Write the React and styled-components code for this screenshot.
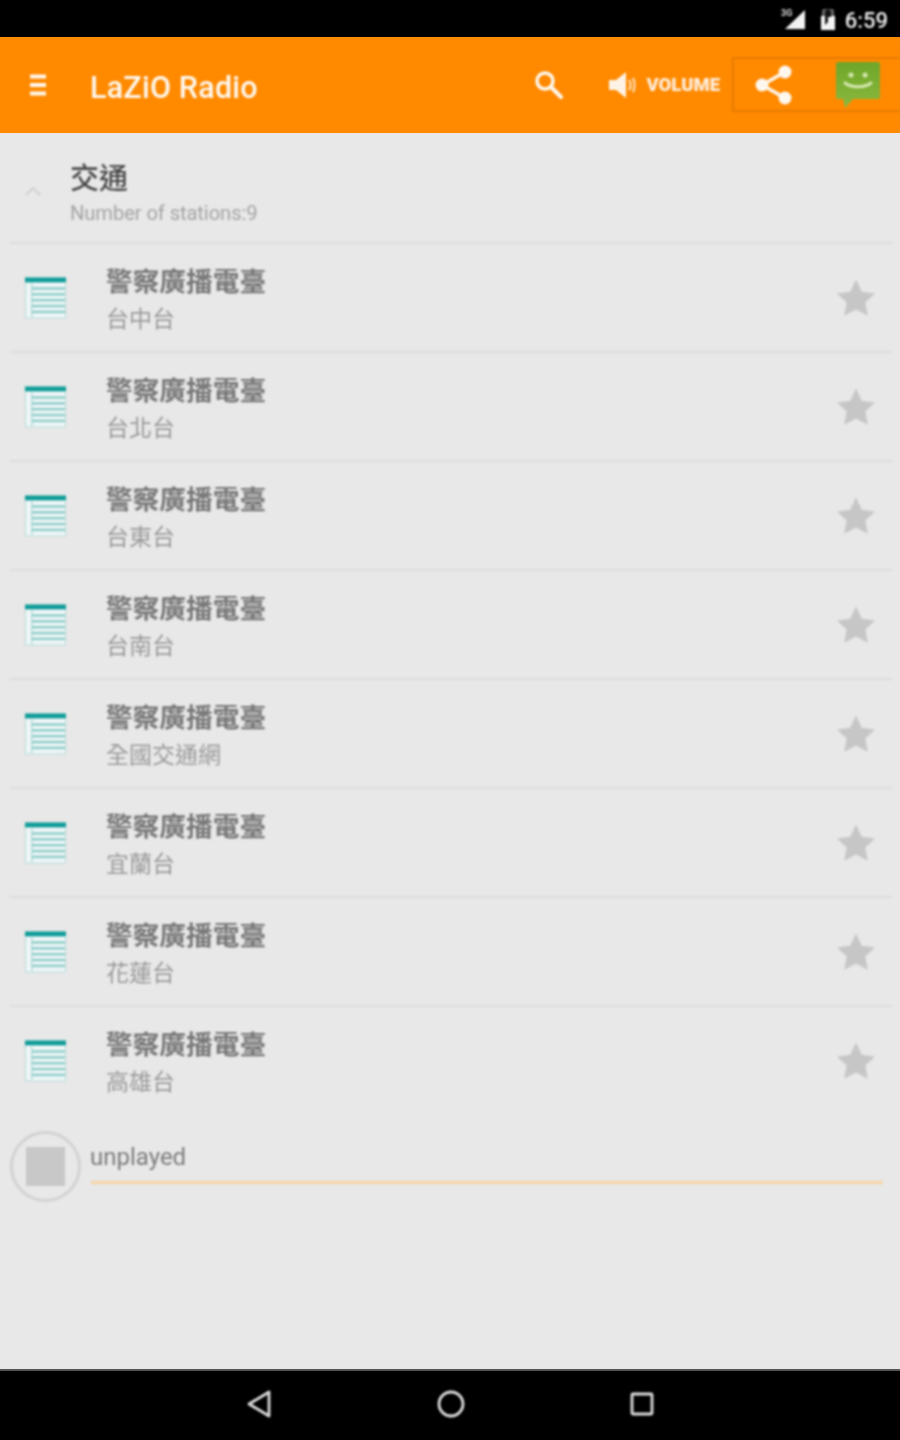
import React from 'react';
import styled, { createGlobalStyle, css } from 'styled-components';

const Global = createGlobalStyle`
  html, body { margin: 0; padding: 0; background: #e8e8e8; }
  * { box-sizing: border-box; }
`;

const soft = css`
  filter: blur(0.8px);
`;

const Page = styled.div`
  width: 900px;
  height: 1440px;
  display: flex;
  flex-direction: column;
  overflow: hidden;
  background: #e8e8e8;
  font-family: Roboto, "Noto Sans CJK TC", sans-serif;
`;

const StatusBar = styled.div`
  height: 37px;
  flex: none;
  background: #000;
`;

const StatusInner = styled.div`
  ${soft}
  height: 100%;
  display: flex;
  align-items: center;
  justify-content: flex-end;
  padding-right: 12px;
  gap: 8px;
`;

const Clock = styled.span`
  color: #ececec;
  font-size: 22px;
  font-weight: 500;
  line-height: 37px;
  padding-top: 3px;
`;

const Toolbar = styled.header`
  height: 96px;
  flex: none;
  background: #ff8a00;
`;

const ToolbarInner = styled.div`
  ${soft}
  height: 100%;
  display: flex;
  align-items: center;
  padding-left: 30px;
`;

const AppTitle = styled.h1`
  margin: 6px 0 0 44px;
  color: #fff8ef;
  font-size: 30.5px;
  font-weight: 500;
  letter-spacing: 0.2px;
  flex: 1;
  line-height: 1;
`;

const VolumeGroup = styled.div`
  display: flex;
  align-items: center;
  gap: 8px;
  margin-left: 44px;
  margin-right: 12px;
`;

const VolumeLabel = styled.span`
  color: #ffeedd;
  font-size: 18.5px;
  font-weight: 900;
  letter-spacing: 0;
`;

const ActionBox = styled.div`
  width: 168px;
  height: 55px;
  margin-top: -1px;
  border: 2px solid #e67c02;
  border-right: none;
  display: flex;
  align-items: center;
  padding-left: 21px;
  gap: 43px;
`;

const Content = styled.main`
  ${soft}
  flex: 1;
  display: flex;
  flex-direction: column;
`;

const Group = styled.div`
  height: 111px;
  margin: 0 8px 0 10px;
  border-bottom: 2px solid #dedede;
  display: flex;
  align-items: center;
  padding-left: 13px;
`;

const Chevron = styled.svg`
  width: 20px;
  height: 12px;
  flex: none;
  margin: 6px 27px 0 0;
`;

const GroupText = styled.div`
  display: flex;
  flex-direction: column;
  padding-top: 10px;
`;

const GroupTitle = styled.div`
  font-size: 29px;
  font-weight: 500;
  line-height: 38px;
  color: #4a4a4a;
`;

const GroupSub = styled.div`
  font-size: 20.2px;
  line-height: 26px;
  margin-top: 2px;
  color: #a4a4a4;
  letter-spacing: -0.1px;
`;

const Row = styled.div`
  height: 109px;
  margin: 0 8px 0 10px;
  border-bottom: 2px solid ${p => (p.$last ? 'transparent' : '#dedede')};
  display: flex;
  align-items: center;
  padding: 0 16px 0 15px;
`;

const RowIcon = styled.svg`
  width: 41px;
  height: 42px;
  flex: none;
`;

const RowText = styled.div`
  flex: 1;
  margin-left: 40px;
  padding-top: 5px;
  display: flex;
  flex-direction: column;
`;

const RowTitle = styled.div`
  font-size: 26.7px;
  font-weight: 700;
  line-height: 34px;
  color: #777777;
`;

const RowSub = styled.div`
  font-size: 23px;
  line-height: 30px;
  margin-top: 6px;
  color: #9a9a9a;
`;

const Star = styled.svg`
  width: 40px;
  height: 40px;
  flex: none;
`;

const Player = styled.div`
  display: flex;
  align-items: flex-start;
  padding: 15px 17px 0 10px;
`;

const StopButton = styled.div`
  width: 71px;
  height: 71px;
  border-radius: 50%;
  border: 3px solid #d2d2d2;
  display: flex;
  align-items: center;
  justify-content: center;
  flex: none;
`;

const StopSquare = styled.div`
  width: 39px;
  height: 39px;
  background: #c8c8c8;
`;

const Track = styled.div`
  flex: 1;
  margin-left: 10px;
  height: 53px;
  border-bottom: 3px solid #f7d3a4;
  padding-top: 11px;
`;

const TrackName = styled.div`
  font-size: 24px;
  line-height: 30px;
  margin-left: -1px;
  color: #7c7c7c;
`;

const NavBar = styled.nav`
  height: 71px;
  flex: none;
  background: #000;
  border-top: 2px solid #555;
`;

const NavInner = styled.div`
  ${soft}
  height: 100%;
  display: flex;
  align-items: flex-start;
  padding: 18px 0 0 246px;
  gap: 163px;
`;

const NavIcon = styled.svg`
  width: 28px;
  height: 30px;
  flex: none;
`;

const stations = ['台中台', '台北台', '台東台', '台南台', '全國交通網', '宜蘭台', '花蓮台', '高雄台'];

const ListIcon = () => (
  <RowIcon viewBox="0 0 42 42">
    <rect x="0.5" y="0.5" width="41" height="41" fill="#eef6f7" stroke="#b8dcd9" />
    <rect x="0" y="0" width="42" height="5" fill="#0f9c98" />
    <path d="M7 6V41" stroke="#b5dcd9" strokeWidth="1.5" />
    {[10, 16, 22, 28, 34].map(y => (
      <rect key={y} x="7" y={y} width="34" height="2.5" fill="#8fcdc9" />
    ))}
  </RowIcon>
);

const StarIcon = () => (
  <Star viewBox="0 0 40 40">
    <path d="M20 1.5l5.8 12.2 13.2 1.7-9.7 9.2 2.5 13.2L20 31.4 8.2 37.8l2.5-13.2L1 15.4l13.2-1.7z" fill="#c6c6c6" />
  </Star>
);

export default function App() {
  return (
    <Page>
      <Global />
      <StatusBar>
        <StatusInner>
          <svg width="30" height="24" viewBox="0 0 30 24">
            <text x="0" y="9" fontSize="9" fontWeight="700" fill="#ddd" fontFamily="Roboto, sans-serif">3G</text>
            <path d="M24 3V22H4z" fill="#f2f2f2" />
          </svg>
          <svg width="18" height="24" viewBox="0 0 18 24">
            <path d="M3 4a2 2 0 0 1 2-2h8a2 2 0 0 1 2 2v5H3z" fill="#666" />
            <path d="M2 9h14v14H2z" fill="#f4f4f4" />
            <path d="M6 5.5a3 3 0 0 1 6 0V10H9v5L6 18z" fill="#111" />
          </svg>
          <Clock>6:59</Clock>
        </StatusInner>
      </StatusBar>
      <Toolbar>
        <ToolbarInner>
          <svg width="16" height="22" viewBox="0 0 16 22">
            <path d="M0 2.5h16M0 11h16M0 19.5h16" stroke="#fff8ef" strokeWidth="4" />
          </svg>
          <AppTitle>LaZiO Radio</AppTitle>
          <svg width="30" height="30" viewBox="0 0 30 30">
            <circle cx="11" cy="11" r="8" fill="none" stroke="#fff8ef" strokeWidth="3.5" />
            <path d="M17 17l10 10" stroke="#fff8ef" strokeWidth="4" strokeLinecap="round" />
          </svg>
          <VolumeGroup>
            <svg width="30" height="28" viewBox="0 0 30 28">
              <path d="M1 9h7l10-8v26L8 19H1z" fill="#fff3e6" />
              <path d="M21 9c2 3 2 7 0 10M25 7c2 4 2 10 0 14" fill="none" stroke="#ffe9d0" strokeWidth="2" />
            </svg>
            <VolumeLabel>VOLUME</VolumeLabel>
          </VolumeGroup>
          <ActionBox>
            <svg width="38" height="42" viewBox="0 0 38 42">
              <path d="M30 8L7 21l23 13" fill="none" stroke="#fff8ef" strokeWidth="3.5" />
              <circle cx="30" cy="8" r="6.5" fill="#fff8ef" />
              <circle cx="7" cy="21" r="6.5" fill="#fff8ef" />
              <circle cx="30" cy="34" r="6.5" fill="#fff8ef" />
            </svg>
            <svg width="44" height="46" viewBox="0 0 44 46">
              <defs>
                <linearGradient id="bubble" x1="0" y1="0" x2="0" y2="1">
                  <stop offset="0" stopColor="#6fa62a" />
                  <stop offset="1" stopColor="#8ab93f" />
                </linearGradient>
              </defs>
              <path d="M2 0h40a2 2 0 0 1 2 2v33a2 2 0 0 1-2 2H17l-8 9-2-9H2a2 2 0 0 1-2-2V2a2 2 0 0 1 2-2z" fill="url(#bubble)" />
              <circle cx="15" cy="13" r="2.5" fill="#d5e8b0" />
              <circle cx="29" cy="13" r="2.5" fill="#d5e8b0" />
              <path d="M9 21c6 5 20 5 26 0" fill="none" stroke="#d5e8b0" strokeWidth="3" strokeLinecap="round" />
            </svg>
          </ActionBox>
        </ToolbarInner>
      </Toolbar>
      <Content>
        <Group>
          <Chevron viewBox="0 0 20 12">
            <path d="M3 10l7-7 7 7" fill="none" stroke="#cfcfcf" strokeWidth="1.8" />
          </Chevron>
          <GroupText>
            <GroupTitle>交通</GroupTitle>
            <GroupSub>Number of stations:9</GroupSub>
          </GroupText>
        </Group>
        {stations.map((s, i) => (
          <Row key={s} $last={i === stations.length - 1}>
            <ListIcon />
            <RowText>
              <RowTitle>警察廣播電臺</RowTitle>
              <RowSub>{s}</RowSub>
            </RowText>
            <StarIcon />
          </Row>
        ))}
        <Player>
          <StopButton>
            <StopSquare />
          </StopButton>
          <Track>
            <TrackName>unplayed</TrackName>
          </Track>
        </Player>
      </Content>
      <NavBar>
        <NavInner>
          <NavIcon viewBox="0 0 28 30">
            <path d="M3 15L23 3v24z" fill="none" stroke="#ddd" strokeWidth="2.8" strokeLinejoin="round" />
          </NavIcon>
          <NavIcon viewBox="0 0 28 30">
            <circle cx="14" cy="15" r="12" fill="none" stroke="#ddd" strokeWidth="2.8" />
          </NavIcon>
          <NavIcon viewBox="0 0 28 30">
            <rect x="4" y="5" width="20" height="20" rx="1" fill="none" stroke="#ddd" strokeWidth="2.8" />
          </NavIcon>
        </NavInner>
      </NavBar>
    </Page>
  );
}
